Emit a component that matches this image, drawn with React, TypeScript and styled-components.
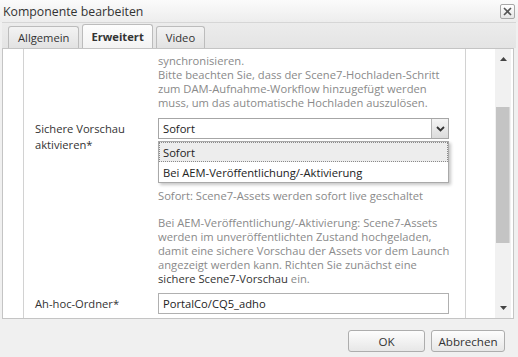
import React from 'react';
import styled, { createGlobalStyle } from 'styled-components';

const uiFont = `'Open Sans', 'Noto Sans', 'Liberation Sans', sans-serif`;

const GlobalStyle = createGlobalStyle`
  html, body {
    margin: 0;
    padding: 0;
    background: #f0f0f0;
  }
  body {
    font-family: ${uiFont};
    font-size: 11.2px;
    color: #333;
  }
`;

const Dialog = styled.div`
  width: 518px;
  height: 357px;
  display: flex;
  flex-direction: column;
  background: #f0f0f0;
  overflow: hidden;
`;

const TitleBar = styled.div`
  height: 22px;
  flex: none;
  display: flex;
  align-items: center;
  justify-content: space-between;
  padding: 0 3px 0 3px;
  background: linear-gradient(#fbfbfb, #ededed);
`;

const Title = styled.div`
  font-size: 12.3px;
  color: #333;
`;

const CloseButton = styled.button`
  width: 15px;
  height: 15px;
  padding: 0;
  border: 1px solid #a8a8a8;
  border-radius: 2px;
  background: linear-gradient(#ffffff, #e6e6e6);
  display: flex;
  align-items: center;
  justify-content: center;
`;

const TabStrip = styled.div`
  height: 25px;
  flex: none;
  margin: 0 2px;
  border-top: 1px solid #d6d6d6;
  background: linear-gradient(#ececec, #e4e4e4);
  display: flex;
  align-items: flex-end;
  gap: 3px;
  padding-left: 6px;
`;

const Tab = styled.div<{ $active?: boolean }>`
  height: ${(p) => (p.$active ? '23px' : '21px')};
  padding: 0 ${(p) => (p.$active ? '8px' : '9px')};
  display: flex;
  align-items: center;
  border: 1px solid #bcbcbc;
  border-bottom: none;
  border-radius: 3px 3px 0 0;
  background: ${(p) => (p.$active ? 'linear-gradient(#fdfdfd, #f3f3f3)' : 'linear-gradient(#f3f3f3, #e2e2e2)')};
  font-weight: ${(p) => (p.$active ? 700 : 400)};
  color: #333;
`;

const Panel = styled.div`
  height: 269px;
  flex: none;
  margin: 0 4px 0 2px;
  border: 1px solid #c4c4c4;
  background: #fff;
  display: flex;
`;

const Gutter = styled.div`
  width: 20px;
  border-right: 1px solid #d2d2d2;
`;

const Content = styled.div`
  width: 430px;
  padding-left: 11px;
  border-right: 1px solid #d2d2d2;
  overflow: hidden;
`;

const Blank = styled.div`
  width: 29px;
`;

const Scrollbar = styled.div`
  width: 16px;
  margin-right: 2px;
  background: #f1f1f1;
  display: flex;
  flex-direction: column;
  align-items: center;
`;

const ArrowButton = styled.div`
  height: 20px;
  width: 100%;
  flex: none;
  display: flex;
  align-items: center;
  justify-content: center;
`;

const Track = styled.div`
  flex: 1;
  width: 100%;
  display: flex;
  flex-direction: column;
`;

const Thumb = styled.div<{ $offset: number; $size: number }>`
  margin-top: ${(p) => p.$offset}px;
  height: ${(p) => p.$size}px;
  margin-left: 1px;
  width: 13px;
  background: #c4c4c4;
  border-right: 1px solid #d8d8d8;
`;

const Form = styled.div`
  margin-top: -14px;
  display: flex;
  flex-direction: column;
`;

const Row = styled.div<{ $gap?: number }>`
  display: grid;
  grid-template-columns: 123px 291px;
  margin-top: ${(p) => p.$gap ?? 0}px;
`;

const Label = styled.div<{ $pad: number }>`
  padding-top: ${(p) => p.$pad}px;
  line-height: 16px;
  color: #333;
`;

const Field = styled.div`
  position: relative;
  display: flex;
  flex-direction: column;
`;

const Help = styled.div<{ $gap?: number }>`
  margin-top: ${(p) => p.$gap ?? 0}px;
  color: #8a8a8a;
  line-height: 14px;
  white-space: nowrap;
`;

const Strong = styled.span`
  color: #333;
`;

const SelectBox = styled.div`
  height: 19px;
  border: 1px solid #a6a6a6;
  background: #fff;
  display: flex;
  align-items: stretch;
`;

const SelectValue = styled.div`
  flex: 1;
  padding-left: 4px;
  display: flex;
  align-items: center;
  color: #222;
`;

const SelectArrow = styled.div`
  width: 16px;
  border-left: 1px solid #b4b4b4;
  background: linear-gradient(#f4f4f4, #dcdcdc);
  display: flex;
  align-items: center;
  justify-content: center;
`;

const Dropdown = styled.div`
  position: absolute;
  top: 23px;
  left: 0;
  width: 289px;
  border: 1px solid #a9a9a9;
  background: #fff;
  box-shadow: 2px 2px 3px rgba(0, 0, 0, 0.22);
  z-index: 2;
`;

const Option = styled.div<{ $selected?: boolean }>`
  height: ${(p) => (p.$selected ? '18px' : '20px')};
  padding-left: ${(p) => (p.$selected ? '3px' : '4px')};
  display: flex;
  align-items: center;
  color: #222;
  background: ${(p) => (p.$selected ? '#ededed' : '#fff')};
  border: ${(p) => (p.$selected ? '1px dotted #8a8a8a' : 'none')};
`;

const TextInput = styled.div`
  height: 19px;
  border: 1px solid #b0b0b0;
  padding-left: 4px;
  display: flex;
  align-items: center;
  color: #222;
  background: #fff;
`;

const Footer = styled.div`
  flex: 1;
  display: flex;
  justify-content: flex-end;
  align-items: flex-start;
  gap: 6px;
  padding: 11px 13px 0 0;
`;

const Button = styled.button<{ $width: number }>`
  width: ${(p) => p.$width}px;
  height: 22px;
  border: 1px solid #adadad;
  border-radius: 3px;
  background: linear-gradient(#fdfdfd, #e7e7e7);
  font-family: ${uiFont};
  font-size: 11.6px;
  color: #333;
  padding: 0;
`;

const Chevron = () => (
  <svg width="9" height="6" viewBox="0 0 9 6">
    <path d="M1 1 L4.5 4.5 L8 1" fill="none" stroke="#333" strokeWidth="1.8" />
  </svg>
);

const Triangle = ({ up }: { up?: boolean }) => (
  <svg width="7" height="4" viewBox="0 0 7 4">
    <path d={up ? 'M0 4 L3.5 0 L7 4 Z' : 'M0 0 L3.5 4 L7 0 Z'} fill="#444" />
  </svg>
);

const App = () => (
  <>
    <GlobalStyle />
    <Dialog>
      <TitleBar>
        <Title>Komponente bearbeiten</Title>
        <CloseButton aria-label="Schließen">
          <svg width="9" height="9" viewBox="0 0 9 9">
            <path d="M1 1 L8 8 M8 1 L1 8" stroke="#555" strokeWidth="1.6" />
          </svg>
        </CloseButton>
      </TitleBar>
      <TabStrip>
        <Tab>Allgemein</Tab>
        <Tab $active>Erweitert</Tab>
        <Tab>Video</Tab>
      </TabStrip>
      <Panel>
        <Gutter />
        <Content>
          <Form>
            <Row>
              <div />
              <Help>Assets werden automatisch mit Scene7 zu</Help>
            </Row>
            <Row $gap={5}>
              <div />
              <Help>
                synchronisieren.
                <br />
                Bitte beachten Sie, dass der Scene7-Hochladen-Schritt
                <br />
                zum DAM-Aufnahme-Workflow hinzugefügt werden
                <br />
                muss, um das automatische Hochladen auszulösen.
              </Help>
            </Row>
            <Row $gap={8}>
              <Label $pad={3}>
                Sichere Vorschau
                <br />
                aktivieren*
              </Label>
              <Field>
                <SelectBox>
                  <SelectValue>Sofort</SelectValue>
                  <SelectArrow>
                    <Chevron />
                  </SelectArrow>
                </SelectBox>
                <Dropdown>
                  <Option $selected>Sofort</Option>
                  <Option>Bei AEM-Veröffentlichung/-Aktivierung</Option>
                </Dropdown>
                <Help $gap={50}>Sofort: Scene7-Assets werden sofort live geschaltet</Help>
                <Help $gap={13}>
                  Bei AEM-Veröffentlichung/-Aktivierung: Scene7-Assets
                  <br />
                  werden im unveröffentlichten Zustand hochgeladen,
                  <br />
                  damit eine sichere Vorschau der Assets vor dem Launch
                  <br />
                  angezeigt werden kann. Richten Sie zunächst eine
                  <br />
                  <Strong>sichere Scene7-Vorschau</Strong> ein.
                </Help>
              </Field>
            </Row>
            <Row $gap={7}>
              <Label $pad={3}>Ah-hoc-Ordner*</Label>
              <Field>
                <TextInput>PortalCo/CQ5_adho</TextInput>
              </Field>
            </Row>
          </Form>
        </Content>
        <Blank />
        <Scrollbar>
          <ArrowButton>
            <Triangle up />
          </ArrowButton>
          <Track>
            <Thumb $offset={38} $size={136} />
          </Track>
          <ArrowButton>
            <Triangle />
          </ArrowButton>
        </Scrollbar>
      </Panel>
      <Footer>
        <Button $width={77}>OK</Button>
        <Button $width={74}>Abbrechen</Button>
      </Footer>
    </Dialog>
  </>
);

export default App;
